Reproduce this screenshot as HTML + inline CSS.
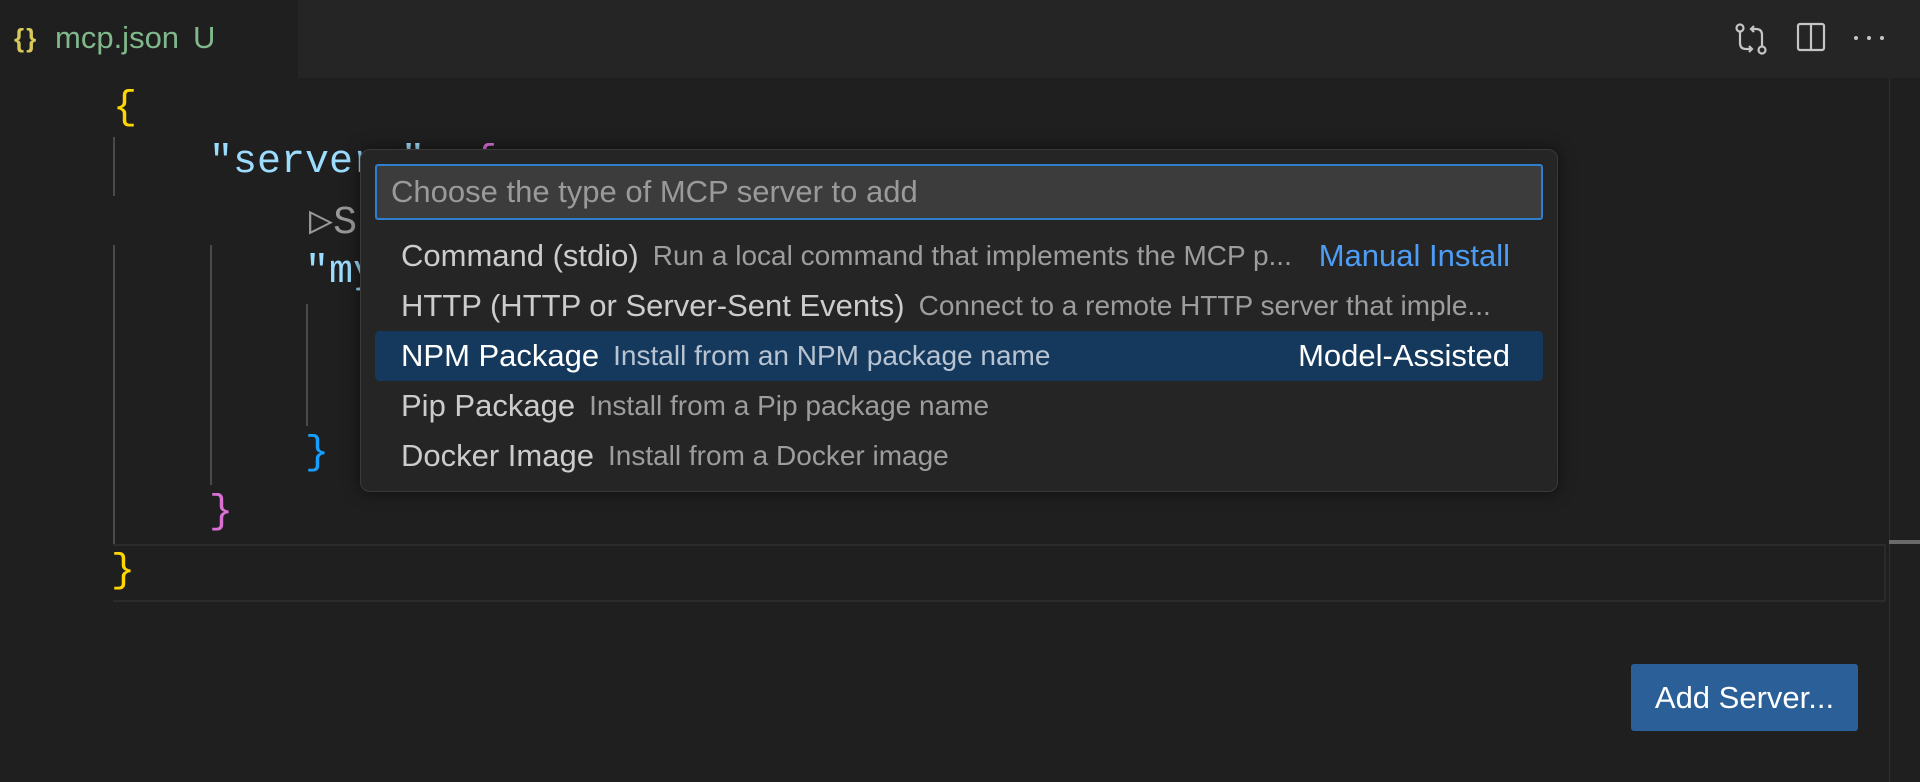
<!DOCTYPE html>
<html><head><meta charset="utf-8"><style>
*{margin:0;padding:0;box-sizing:border-box}
html,body{width:1920px;height:782px;overflow:hidden;background:#1f1f1f;font-family:"Liberation Sans",sans-serif}
.abs{position:absolute}
.tabbar{left:0;top:0;width:1920px;height:78px;background:#252525}
.tab{left:0;top:0;width:298px;height:78px;background:#1f1f1f}
.code{font-family:"Liberation Mono",monospace;font-size:40px;line-height:50px;white-space:pre;color:#9cdcfe}
.g{background:#4a4a4a;width:2px}
.pop{left:360px;top:149px;width:1198px;height:343px;background:#252526;border:1px solid #3a3a3a;border-radius:10px;box-shadow:0 0 16px rgba(0,0,0,.55)}
.inp{left:14px;top:14px;width:1168px;height:56px;background:#3c3c3c;border:2px solid #2f7fcf;border-radius:3px;color:#9a9a9a;font-size:31px;line-height:52px;padding-left:14px}
.row{left:14px;width:1168px;height:50px;border-radius:5px;display:flex;align-items:center;padding-left:26px;white-space:nowrap}
.l{color:#cccccc;font-size:31px;margin-right:14px}
.d{color:#9d9d9d;font-size:28px}
.r{position:absolute;right:33px;font-size:31px}
.sel{background:#15395d}
.sel .l,.sel .r{color:#fff}
.sel .d{color:#b8c4d2}
</style></head><body>
<div class="abs tabbar"></div>
<div class="abs tab"></div>
<div class="abs" style="left:14px;top:23px;font-size:26px;color:#d6c95a;letter-spacing:2px;font-weight:bold">{}</div>
<div class="abs" style="left:55px;top:20px;font-size:31px;color:#81b88b">mcp.json</div>
<div class="abs" style="left:193px;top:20px;font-size:31px;color:#81b88b">U</div>
<svg class="abs" style="left:1734px;top:22px" width="34" height="34" viewBox="0 0 34 34" fill="none" stroke="#c5c5c5" stroke-width="2.2"><circle cx="6" cy="6" r="3.5"/><circle cx="28" cy="28" r="3.5"/><path d="M6 10v11q0 6 6 6h6M15 24l3 3-3 3M28 24V13q0-6-6-6h-5M20 4l-3 3 3 3"/></svg>
<svg class="abs" style="left:1796px;top:22px" width="30" height="30" viewBox="0 0 30 30" fill="none" stroke="#c5c5c5" stroke-width="2.2"><rect x="2" y="2" width="26" height="26" rx="2"/><path d="M15 2v26"/></svg>
<div class="abs" style="left:1854px;top:36px;width:30px;height:4px;display:flex;justify-content:space-between"><i style="width:4px;height:4px;background:#c5c5c5;border-radius:50%"></i><i style="width:4px;height:4px;background:#c5c5c5;border-radius:50%"></i><i style="width:4px;height:4px;background:#c5c5c5;border-radius:50%"></i></div>

<div class="abs" style="left:1889px;top:78px;width:1px;height:704px;background:#2e2e2e"></div>
<div class="abs" style="left:1889px;top:540px;width:31px;height:4px;background:#6a6a6a"></div>
<div class="abs" style="left:113px;top:544px;width:1773px;height:58px;border:2px solid #2b2b2b;border-left:none"></div>

<div class="abs g" style="left:113px;top:137px;height:59px"></div>
<div class="abs g" style="left:113px;top:245px;height:299px"></div>
<div class="abs g" style="left:210px;top:245px;height:240px"></div>
<div class="abs g" style="left:306px;top:304px;height:122px"></div>

<div class="abs code" style="left:113px;top:84px;color:#ffd700">{</div>
<div class="abs code" style="left:209px;top:138px">"servers"<span style="color:#ccc">: </span><span style="color:#da70d6">{</span></div>
<div class="abs code" style="left:309px;top:199px;color:#999">▷Start</div>
<div class="abs code" style="left:305px;top:248px">"my-server"</div>
<div class="abs code" style="left:305px;top:429px;color:#179fff">}</div>
<div class="abs code" style="left:209px;top:488px;color:#da70d6">}</div>
<div class="abs code" style="left:111px;top:547px;color:#ffd700">}</div>

<div class="abs pop">
<div class="abs inp">Choose the type of MCP server to add</div>
<div class="abs row" style="top:81px"><span class="l">Command (stdio)</span><span class="d">Run a local command that implements the MCP p...</span><span class="r" style="color:#4d9df5">Manual Install</span></div>
<div class="abs row" style="top:131px"><span class="l">HTTP (HTTP or Server-Sent Events)</span><span class="d">Connect to a remote HTTP server that imple...</span></div>
<div class="abs row sel" style="top:181px"><span class="l">NPM Package</span><span class="d">Install from an NPM package name</span><span class="r">Model-Assisted</span></div>
<div class="abs row" style="top:231px"><span class="l">Pip Package</span><span class="d">Install from a Pip package name</span></div>
<div class="abs row" style="top:281px"><span class="l">Docker Image</span><span class="d">Install from a Docker image</span></div>
</div>

<div class="abs" style="left:1631px;top:664px;width:227px;height:67px;background:#2b5f98;border-radius:3px;color:#fff;font-size:31px;line-height:67px;text-align:center">Add Server...</div>
</body></html>
